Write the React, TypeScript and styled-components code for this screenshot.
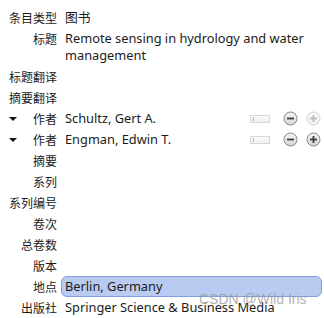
import React from 'react';
import styled, { createGlobalStyle } from 'styled-components';

const GlobalStyle = createGlobalStyle`
  body {
    margin: 0;
    background: #fff;
    font-family: "Noto Sans", "Noto Sans CJK SC", sans-serif;
    color: #1b1b1b;
  }
`;

interface Field {
  label: string,
  value?: string,
  creator?: boolean,
  canAdd?: boolean,
  selected?: boolean,
}

const fields: Field[] = [
  { label: '条目类型', value: '图书' },
  { label: '标题', value: 'Remote sensing in hydrology and water management' },
  { label: '标题翻译' },
  { label: '摘要翻译' },
  { label: '作者', value: 'Schultz, Gert A.', creator: true, canAdd: false },
  { label: '作者', value: 'Engman, Edwin T.', creator: true, canAdd: true },
  { label: '摘要' },
  { label: '系列' },
  { label: '系列编号' },
  { label: '卷次' },
  { label: '总卷数' },
  { label: '版本' },
  { label: '地点', value: 'Berlin, Germany', selected: true },
  { label: '出版社', value: 'Springer Science & Business Media' },
];

const CircleButton = ({ plus, faded }: { plus?: boolean, faded?: boolean }) => (
  <RoundBtn faded={faded}>
    <svg width="15" height="15" viewBox="0 0 15 15">
      <defs>
        <linearGradient id={plus ? 'gp' : 'gm'} x1="0" y1="0" x2="0" y2="1">
          <stop offset="0" stopColor="#f4f4f4" />
          <stop offset="1" stopColor="#d6d6d6" />
        </linearGradient>
      </defs>
      <circle cx="7.5" cy="7.5" r="6.5" fill={`url(#${plus ? 'gp' : 'gm'})`} stroke="#8a8a8a" />
      <rect x="4" y="6.6" width="7" height="1.8" fill="#3e3e3e" />
      {plus && <rect x="6.6" y="4" width="1.8" height="7" fill="#3e3e3e" />}
    </svg>
  </RoundBtn>
);

const App = () => (
  <Page>
    <GlobalStyle />
    <Fields>
      {fields.map((f, i) => (
        <React.Fragment key={i}>
          <Label>
            {f.creator && <Twisty />}
            <span>{f.label}</span>
          </Label>
          <Value selected={f.selected}>
            <ValueText>{f.value}</ValueText>
            {f.creator && (
              <Controls>
                <TypeSwitch />
                <CircleButton />
                <CircleButton plus faded={!f.canAdd} />
              </Controls>
            )}
          </Value>
        </React.Fragment>
      ))}
    </Fields>
    <Watermark>CSDN @Wild Iris</Watermark>
  </Page>
);

export default App;

const Page = styled.div`
  position: relative;
  width: 324px;
  height: 318px;
  overflow: hidden;
  padding-top: 7px;
  box-sizing: border-box;
`;

const Fields = styled.div`
  display: grid;
  grid-template-columns: 57px 1fr;
  column-gap: 5px;
  font-size: 12.8px;
`;

const Label = styled.div`
  display: flex;
  align-items: center;
  justify-content: space-between;
  height: 21px;
  padding-left: 9px;
  font-size: 12px;
  & > span {
    margin-left: auto;
  }
`;

const Twisty = styled.i`
  width: 0;
  height: 0;
  border-left: 4px solid transparent;
  border-right: 4px solid transparent;
  border-top: 4px solid #111;
`;

const Value = styled.div<{ selected?: boolean }>`
  display: flex;
  align-items: flex-start;
  min-height: 21px;
  padding: 1px 0 1px 3px;
  box-sizing: border-box;
  line-height: 17px;
  border: 1px solid ${p => (p.selected ? '#7f9fe0' : 'transparent')};
  border-radius: 6px;
  background: ${p => (p.selected ? '#b9cbf1' : 'transparent')};
  margin-right: 2px;
  margin-left: -1px;
`;

const ValueText = styled.div`
  flex: 1;
  padding-right: 16px;
`;

const Controls = styled.div`
  display: flex;
  align-items: center;
  height: 17px;
  gap: 8px;
`;

const TypeSwitch = styled.div`
  width: 18px;
  height: 6px;
  border: 1px solid #d8d8d8;
  background: linear-gradient(#fafafa, #eeeeee);
  margin-right: 5px;
  position: relative;
  &::before {
    content: '';
    position: absolute;
    left: 2px;
    top: 1px;
    width: 1px;
    height: 4px;
    background: #b8b8b8;
  }
`;

const RoundBtn = styled.div<{ faded?: boolean }>`
  display: flex;
  opacity: ${p => (p.faded ? 0.35 : 1)};
`;

const Watermark = styled.div`
  position: absolute;
  left: 199px;
  top: 291px;
  font-family: "Liberation Sans", Arial, sans-serif;
  font-size: 14px;
  color: rgba(150, 150, 150, 0.75);
`;
